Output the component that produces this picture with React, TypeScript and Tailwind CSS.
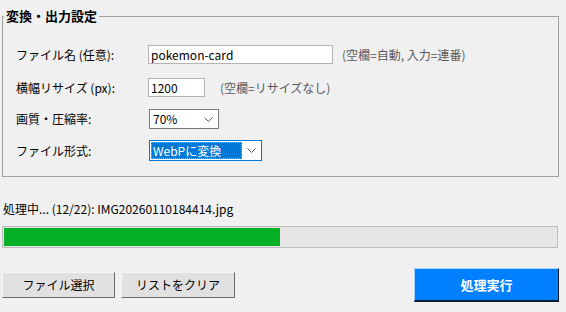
import { useState } from 'react';

const FONT = "font-['Noto_Sans_CJK_JP','Noto_Sans',sans-serif]";

function Chevron() {
  return (
    <svg width="9" height="5" viewBox="0 0 9 5" className="shrink-0">
      <polyline points="0.5,0.5 4.5,4.5 8.5,0.5" fill="none" stroke="#555" strokeWidth="1" />
    </svg>
  );
}

export default function App() {
  const [fileName, setFileName] = useState('pokemon-card');
  const [width, setWidth] = useState('1200');
  const done = 12;
  const total = 22;
  // bar shows files already finished (the current one is still running)
  const pct = ((done - 1) / total) * 100;

  return (
    <div className={`w-[566px] h-[312px] bg-[#f0f0f0] overflow-hidden text-[12px] text-black ${FONT}`}>
      {/* Group box */}
      <fieldset className="ml-[2px] mt-[7px] w-[557px] h-[170px] border border-[#a0a0a0] pl-[13px]">
        <legend className="-ml-[12px] px-[2px] text-[13px] font-bold leading-[18px]">変換・出力設定</legend>

        {/* File name */}
        <div className="mt-[20px] flex items-center h-[19px]">
          <span className="w-[132px] shrink-0">ファイル名 (任意):</span>
          <input
            value={fileName}
            onChange={(e) => setFileName(e.target.value)}
            className="w-[185px] h-[19px] bg-white border border-[#b4b4b4] px-[2px] text-[12px] outline-none"
          />
          <span className="ml-[9px] text-[#5a5a5a]">(空欄=自動, 入力=連番)</span>
        </div>

        {/* Resize */}
        <div className="mt-[14px] flex items-center h-[19px]">
          <span className="w-[132px] shrink-0">横幅リサイズ (px):</span>
          <input
            value={width}
            onChange={(e) => setWidth(e.target.value)}
            className="w-[57px] h-[19px] bg-white border border-[#b4b4b4] px-[2px] text-[12px] outline-none"
          />
          <span className="ml-[15px] text-[#5a5a5a]">(空欄=リサイズなし)</span>
        </div>

        {/* Quality */}
        <div className="mt-[12px] flex items-center h-[20px]">
          <span className="w-[133px] shrink-0">画質・圧縮率:</span>
          <div className="w-[70px] h-[20px] bg-white border border-[#7a7a7a] flex items-center justify-between pl-[3px] pr-[5px]">
            <span>70%</span>
            <Chevron />
          </div>
        </div>

        {/* Format */}
        <div className="mt-[11px] flex items-center h-[21px]">
          <span className="w-[133px] shrink-0">ファイル形式:</span>
          <div className="w-[113px] h-[21px] bg-white border border-[#0078d7] flex items-center p-[1px]">
            <div className="w-[91px] h-full bg-[#0078d7] text-white flex items-center pl-[2px] outline outline-1 outline-dotted outline-[#8fb8e0] -outline-offset-1">
              WebPに変換
            </div>
            <div className="flex-1 flex justify-center">
              <Chevron />
            </div>
          </div>
        </div>
      </fieldset>

      {/* Status */}
      <div className="mt-[24px] ml-[3px] leading-[16px]">
        処理中... ({done}/{total}): IMG20260110184414.jpg
      </div>

      {/* Progress */}
      <div className="mt-[9px] ml-[2px] w-[556px] h-[22px] bg-[#e6e6e6] border border-[#bcbcbc] p-[1px]">
        <div className="h-full bg-[#06b025]" style={{ width: `${pct}%` }} />
      </div>

      {/* Buttons */}
      <div className="mt-[20px] ml-[2px] w-[557px] flex items-center">
        <button className="w-[113px] h-[26px] bg-[#e1e1e1] border border-t-[#f4f4f4] border-l-[#f4f4f4] border-r-[#6a6a6a] border-b-[#6a6a6a] text-[12px]">
          ファイル選択
        </button>
        <button className="ml-[6px] w-[114px] h-[26px] bg-[#e1e1e1] border border-t-[#f4f4f4] border-l-[#f4f4f4] border-r-[#6a6a6a] border-b-[#6a6a6a] text-[12px]">
          リストをクリア
        </button>
        <button className="ml-auto w-[145px] h-[34px] bg-[#0080ff] border border-t-[#9fd0ff] border-l-[#9fd0ff] border-r-[#0a1a30] border-b-[#0a1a30] border-b-2 text-white text-[13px] font-bold">
          処理実行
        </button>
      </div>
    </div>
  );
}
